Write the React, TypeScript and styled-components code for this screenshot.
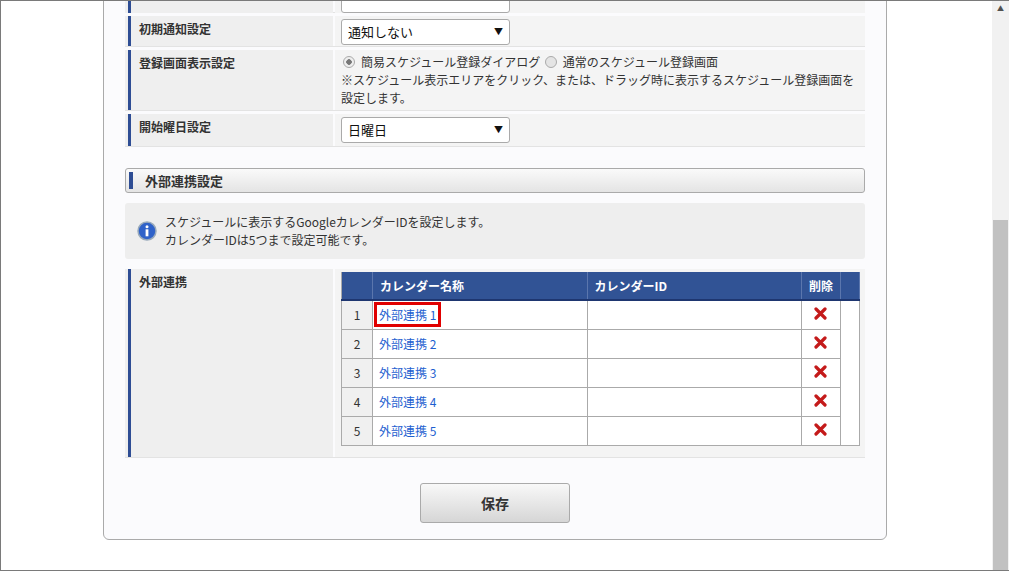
import React from "react";
import styled, { createGlobalStyle } from "styled-components";

const G = createGlobalStyle`
  html,body{margin:0;padding:0;height:100%;overflow:hidden;}
  body{font-family:"Noto Sans CJK JP","Noto Sans",sans-serif;font-size:12px;color:#333;background:#fff;}
`;
const Frame = styled.div`
  width:1009px;height:571px;box-sizing:border-box;border:1px solid #7a7a7a;border-right:none;display:flex;overflow:hidden;background:#fff;
`;
const Main = styled.div`flex:1;overflow:hidden;`;
const Scroll = styled.div`
  width:17px;background:#f1f1f1;display:flex;flex-direction:column;
  &::before{content:"";display:block;height:17px;}
`;
const Arrow = styled.div`height:14px;display:flex;justify-content:center;align-items:center;font-size:7px;color:#505050;margin-top:-17px;`;
const Thumb = styled.div`margin-top:auto;height:350px;background:#c1c1c1;margin-left:1px;margin-right:1px;`;
const Panel = styled.div`
  margin:-40px 0 0 102px;width:784px;height:579px;box-sizing:border-box;border:1px solid #aaa;border-radius:0 0 6px 6px;background:#fbfbfd;
  padding:0 21px;display:flex;flex-direction:column;
`;
const Row = styled.div<{h:number}>`display:grid;grid-template-columns:208px 530px;column-gap:2px;height:${p=>p.h}px;margin-bottom:3px;border-bottom:1px solid #e3e3e3;`;
const Label = styled.div`background:#efefef;position:relative;padding:4px 0 0 14px;font-weight:bold;color:#333;
  &::before{content:"";position:absolute;left:3px;top:0;bottom:0;width:3px;background:#2e4d94;}`;
const Value = styled.div`background:#f4f4f4;padding:3px 0 0 6px;line-height:18px;`;
const Select = styled.div`width:169px;height:26px;box-sizing:border-box;border:1px solid #aaa;border-radius:3px;background:#fff;display:flex;align-items:center;justify-content:space-between;padding:0 6px;font-size:13px;color:#111;
  span:last-child{font-size:9px;}`;
const Radio = styled.span<{on?:boolean}>`display:inline-block;width:10px;height:10px;border-radius:50%;border:1px solid #aaa;background:${p=>p.on?"radial-gradient(circle,#777 0 2.5px,#eee 3px)":"#e4e4e4"};vertical-align:-1px;margin:0 6px 0 2px;`;
const SecHead = styled.div`margin-top:18px;height:25px;box-sizing:border-box;border:1px solid #aaa;border-radius:3px;background:linear-gradient(#fafafa,#e4e4e4);display:flex;align-items:center;font-weight:bold;font-size:13px;
  &::before{content:"";width:4px;height:17px;background:#2e4d94;margin:0 12px 0 3px;}`;
const Info = styled.div`margin-top:10px;height:56px;background:#eeeeee;border-radius:3px;display:flex;align-items:center;padding-left:12px;gap:8px;line-height:18px;`;
const Tbl = styled.table`border-collapse:collapse;width:519px;margin:3px 0 0 6px;background:#fff;
  border:1px solid #aaa;border-top:none;
  th{background:#315395;color:#fff;height:27px;text-align:left;padding:0 7px;border-right:1px solid #5b76ad;border-bottom:2px solid #1e3670;font-size:12px;white-space:nowrap;}
  td{height:28px;border:1px solid #aaa;padding:0 6px;}
`;
const Num = styled.td`background:#f0f0f0;width:17px;text-align:center;`;
const Link = styled.a<{hl?:boolean}>`color:#1e5fd0;text-decoration:none;${p=>p.hl?"outline:3px solid #e00000;outline-offset:1px;padding:0 1px;margin-left:-1px;":""}`;
const Del = styled.td`text-align:center;`;
const Btn = styled.button`align-self:center;margin-top:22px;width:150px;height:40px;border:1px solid #aaa;border-radius:3px;background:linear-gradient(#f8f8f8,#d6d6d6);font-family:inherit;font-weight:bold;font-size:14px;color:#333;`;

const X = () => (<svg width="13" height="13" viewBox="0 0 13 13"><path d="M2 2L11 11M11 2L2 11" stroke="#c41a1a" strokeWidth="3.2" strokeLinecap="round"/></svg>);

export default function App(){
  return (<><G/><Frame><Main><Panel>
    <Row h={50}><Label/><Value><Select style={{marginTop:22}}><span/><span/></Select></Value></Row>
    <Row h={30}><Label>初期通知設定</Label><Value><Select><span>通知しない</span><span>▼</span></Select></Value></Row>
    <Row h={60}><Label>登録画面表示設定</Label><Value><div><Radio on/>簡易スケジュール登録ダイアログ <Radio/>通常のスケジュール登録画面</div><div>※スケジュール表示エリアをクリック、または、ドラッグ時に表示するスケジュール登録画面を<br/>設定します。</div></Value></Row>
    <Row h={32}><Label>開始曜日設定</Label><Value><Select><span>日曜日</span><span>▼</span></Select></Value></Row>
    <SecHead>外部連携設定</SecHead>
    <Info><svg width="20" height="20" viewBox="0 0 20 20"><circle cx="10" cy="10" r="9" fill="#2f62c9" stroke="#9ab" strokeWidth="1.5"/><circle cx="10" cy="5.8" r="1.5" fill="#fff"/><rect x="8.6" y="8.3" width="2.8" height="7" fill="#fff"/></svg><div>スケジュールに表示するGoogleカレンダーIDを設定します。<br/>カレンダーIDは5つまで設定可能です。</div></Info>
    <Row h={188} style={{marginTop:10}}><Label>外部連携</Label><Value style={{padding:0}}>
      <Tbl><thead><tr><th style={{width:16}}></th><th style={{width:200}}>カレンダー名称</th><th style={{width:200}}>カレンダーID</th><th style={{width:26,textAlign:"center",padding:"0 6px"}}>削除</th><th style={{width:4}}></th></tr></thead>
      <tbody>{[1,2,3,4,5].map(i=>(<tr key={i}><Num>{i}</Num><td><Link hl={i===1}>外部連携 {i}</Link></td><td/><Del><X/></Del><td style={{border:"none"}}/></tr>))}</tbody></Tbl>
    </Value></Row>
    <Btn>保存</Btn>
  </Panel></Main><Scroll><Arrow>▲</Arrow><Thumb/></Scroll></Frame></>);
}
